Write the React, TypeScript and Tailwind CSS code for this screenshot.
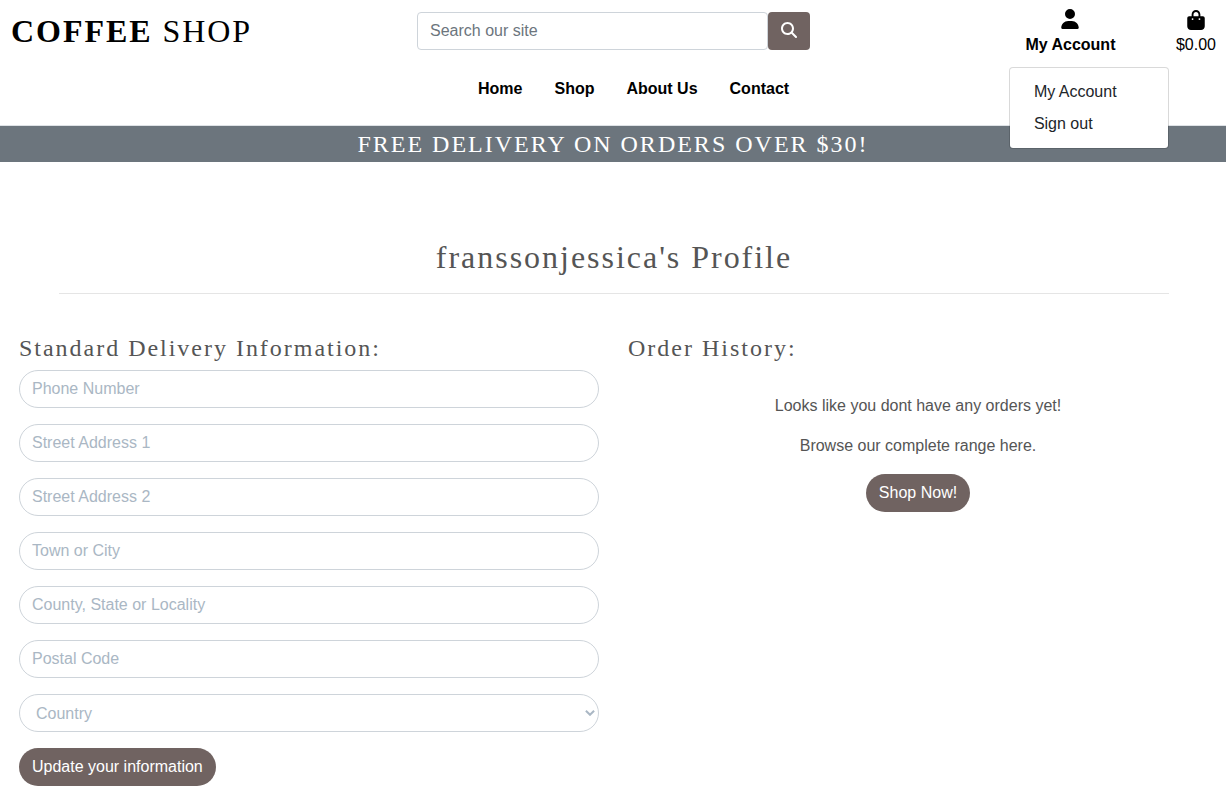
import React from "react";
import { FaBagShopping, FaMagnifyingGlass, FaUser } from "react-icons/fa6";

const fields = [
  "Phone Number",
  "Street Address 1",
  "Street Address 2",
  "Town or City",
  "County, State or Locality",
  "Postal Code",
];

const links = ["Home", "Shop", "About Us", "Contact"];

export default function App() {
  return (
    <div className="h-[799px] overflow-hidden bg-white font-['Liberation_Sans',Arial,sans-serif] text-base leading-6 text-[#555555]">
      <header className="flex h-[125px] flex-col text-black">
        <div className="grid h-[62px] grid-cols-[409px_409px_1fr]">
          <h1 className="pl-[11px] pt-[12px] font-['Liberation_Serif',serif] text-[32px] leading-[38px] tracking-[1.95px]">
            <strong>COFFEE</strong> SHOP
          </h1>
          <form className="flex h-[50px] pl-2 pr-2 pt-3">
            <input
              placeholder="Search our site"
              className="h-[38px] w-[351px] rounded border border-[#ced4da] px-3 outline-none placeholder:text-[#6c757d]"
            />
            <button type="button" aria-label="Search" className="flex h-[38px] w-[42px] items-center justify-center rounded bg-[#706361] pb-[2px] text-white">
              <FaMagnifyingGlass size={16} />
            </button>
          </form>
          <div className="flex justify-end gap-[60.5px] pr-[10px] pt-2">
            <div className="relative flex flex-col items-center">
              <FaUser size={20} className="mt-[0.5px]" />
              <strong className="mt-[4.5px]">My Account</strong>
              <div className="absolute left-[-16.5px] top-[59px] z-10 h-[82px] w-[160px] rounded border border-black/15 bg-white bg-clip-padding pt-2 text-[#212529]">
                <a className="block h-8 px-6 py-1">My Account</a>
                <a className="block h-8 px-6 py-1">Sign out</a>
              </div>
            </div>
            <div className="flex flex-col items-center">
              <FaBagShopping size={20} className="mt-[1.5px]" />
              <span className="mt-[3.5px]">$0.00</span>
            </div>
          </div>
        </div>
        <nav className="flex gap-8 pl-[478px] pt-[15px] font-bold">
          {links.map((label) => <a key={label}>{label}</a>)}
        </nav>
      </header>
      <div className="h-[37px] border-t border-[#dee2e6] bg-[#6c757d] pt-[4px] text-center font-['Liberation_Serif',serif] text-2xl leading-[29px] tracking-[2px] text-white">
        FREE DELIVERY ON ORDERS OVER $30!
      </div>
      <main>
        <h2 className="ml-[59px] mr-[57px] h-[132px] border-b border-black/10 pt-[76px] text-center font-['Liberation_Serif',serif] text-[32px] leading-[38px] tracking-[1.97px]">
          franssonjessica's Profile
        </h2>
        <div className="grid grid-cols-[580px_580px] gap-[29px] pl-[19px] pt-[40px]">
          <section>
            <h3 className="mb-[7px] font-['Liberation_Serif',serif] text-2xl leading-[29px] tracking-[1.98px]">Standard Delivery Information:</h3>
            <form className="flex flex-col items-start gap-4">
              {fields.map((label) => (
                <input key={label} placeholder={label} className="h-[38px] w-full rounded-full border border-[#ced4da] px-3 outline-none placeholder:text-[#aab7c4]" />
              ))}
              <button type="button" className="flex h-[38px] w-full items-center justify-between rounded-full border border-[#ced4da] pl-4 pr-[3px] text-[#aab7c4]">
                <span className="pt-[2px]">Country</span>
                <svg width="10" height="6" viewBox="0 0 10 6" fill="none"><path d="m.9.8 4.1 4 4.1-4" stroke="#aab7c4" strokeWidth="2" /></svg>
              </button>
              <button type="button" className="h-[38px] rounded-full bg-[#706361] px-[13px] text-white">Update your information</button>
            </form>
          </section>
          <section>
            <h3 className="font-['Liberation_Serif',serif] text-2xl leading-[29px] tracking-[2px]">Order History:</h3>
            <div className="flex flex-col items-center pt-[31px] text-center">
              <p className="mb-4">Looks like you dont have any orders yet!</p>
              <p className="mb-4">Browse our complete range here.</p>
              <button type="button" className="h-[38px] rounded-full bg-[#706361] px-[13px] text-white">Shop Now!</button>
            </div>
          </section>
        </div>
      </main>
    </div>
  );
}
